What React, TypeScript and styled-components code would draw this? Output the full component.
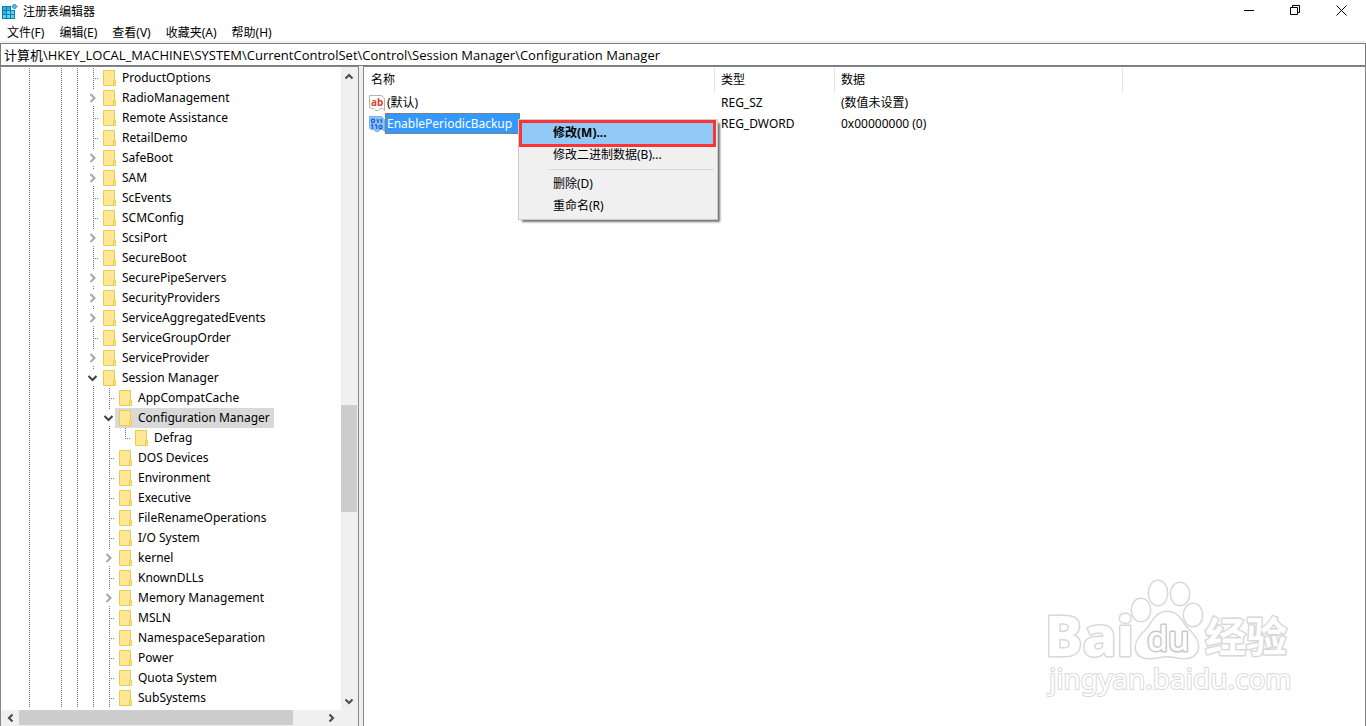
import React from "react";
import styled, { createGlobalStyle, css } from "styled-components";

const ui = `"Noto Sans", "Noto Sans CJK SC", sans-serif`;
const frame = "#828790";

const GlobalStyle = createGlobalStyle`
  * { box-sizing: border-box; }
  body { margin: 0; background: #fff; color: #000; font: 12px/20px ${ui}; overflow: hidden; }
  button, input { font: inherit; color: inherit; border: 0; padding: 0; background: none; }
`;

const Window = styled.div`
  display: flex;
  flex-direction: column;
  height: 100vh;
`;

const TitleBar = styled.header`
  display: flex;
  align-items: flex-start;
  height: 22px;
  padding: 0 2px;
  flex: none;
`;

const Title = styled.h1`
  margin: 0 auto 0 4px;
  font-size: 12px;
  line-height: 24px;
  font-weight: 400;
`;

const WindowButton = styled.button`
  width: 46px;
  height: 20px;
  display: grid;
  place-items: center;
`;

const MenuBar = styled.nav`
  display: flex;
  gap: 15px;
  height: 21px;
  flex: none;
  padding-left: 7px;
  border-bottom: 2px solid #f0f0f0;
`;

const MenuButton = styled.button`
  white-space: nowrap;
  line-height: 22px;
`;

const Address = styled.input`
  flex: none;
  height: 23px;
  width: 100%;
  padding: 0 3px;
  border: 1px solid #7a7a7a;
  outline: 0;
  font-family: "Open Sans", "Noto Sans CJK SC", sans-serif;
  font-size: 13px;
`;

const Panes = styled.main`
  flex: 1;
  min-height: 0;
  display: flex;
  gap: 4px;
  background: #f0f0f0;
`;

const TreePane = styled.section`
  flex: none;
  width: 359px;
  display: flex;
  flex-direction: column;
  border: 1px solid ${frame};
  border-bottom: 0;
  background: #fff;
`;

const TreeView = styled.div`
  flex: 1;
  min-height: 0;
  display: flex;
`;

const Tree = styled.ul`
  flex: 1;
  min-width: 0;
  overflow: hidden;
  list-style: none;
  margin: 0;
  padding: 1px 0 0 20px;
`;

const TreeRow = styled.li`
  display: flex;
  height: 20px;
`;

const dotsDown = "repeating-linear-gradient(to bottom, #707070 0 1px, transparent 1px 2px)";
const dotsAcross = "repeating-linear-gradient(to right, #707070 0 1px, transparent 1px 2px)";

const Guide = styled.span<{ $line: boolean }>`
  flex: none;
  width: 16px;
  background: ${(p) => (p.$line ? dotsDown : "none")} 8px 0 / 1px 100% no-repeat;
`;

const Branch = styled.span<{ $last?: boolean }>`
  flex: none;
  width: 14px;
  background:
    ${dotsDown} 8px 0 / 1px ${(p) => (p.$last ? "10px" : "100%")} no-repeat,
    ${dotsAcross} 8px 10px / 7px 1px no-repeat;
`;

const Expander = styled.button`
  flex: none;
  width: 14px;
  display: grid;
  align-items: center;
  background:
    ${dotsDown} 8px 0 / 1px 2px no-repeat,
    ${dotsDown} 8px 18px / 1px 2px no-repeat;
`;

const Key = styled.button<{ $selected: boolean }>`
  display: flex;
  align-items: center;
  gap: 6px;
  padding: 0 4px;
  white-space: nowrap;
  background: ${(p) => (p.$selected ? "#d9d9d9" : "none")};
`;

const KeyName = styled.span`
  line-height: 18px;
  padding-bottom: 1px;
`;

const scrollTrack = css`
  display: flex;
  flex: none;
  background: #f0f0f0;
`;

const VerticalBar = styled.div`
  ${scrollTrack}
  flex-direction: column;
  width: 17px;
  padding-right: 1px;
`;

const HorizontalBar = styled.div`
  ${scrollTrack}
  height: 16px;
  padding: 0 19px 1px 1px;
`;

const ArrowButton = styled.button<{ $vertical?: boolean }>`
  flex: none;
  width: ${(p) => (p.$vertical ? 16 : 17)}px;
  height: ${(p) => (p.$vertical ? 19 : 15)}px;
  display: grid;
  place-items: center;
`;

const Space = styled.span<{ $size: number }>`
  flex: ${(p) => p.$size} 1 0;
`;

const Thumb = styled.span<{ $size: number }>`
  flex: ${(p) => p.$size} 1 0;
  background: #cdcdcd;
`;

const ValuePane = styled.section`
  flex: 1;
  min-width: 0;
  position: relative;
  border: 1px solid ${frame};
  border-bottom: 0;
  background: #fff;
`;

const Values = styled.table`
  width: 100%;
  table-layout: fixed;
  border-collapse: separate;
  border-spacing: 0;
`;

const Column = styled.col<{ $width?: number }>`
  width: ${(p) => (p.$width ? `${p.$width}px` : "auto")};
`;

const HeadCell = styled.th`
  height: 25px;
  padding: 0 7px;
  text-align: left;
  font-weight: 400;
  border-right: 1px solid #e5e5e5;
  &:last-child { border-right: 0; }
  & + & { padding-left: 6px; }
`;

const Cell = styled.td`
  height: 21px;
  padding: 0 6px;
  white-space: nowrap;
  &:first-child { padding: 0 5px; }
`;

const NameBox = styled.div`
  display: flex;
  align-items: center;
  position: relative;
`;

const ValueName = styled.button<{ $selected?: boolean }>`
  height: 21px;
  padding: 0 8px 0 2px;
  ${(p) =>
    p.$selected &&
    css`
      color: #fff;
      background: #3399ff;
      outline: 1px dotted #cc6600;
      outline-offset: -1px;
    `}
`;

const ContextMenu = styled.div`
  position: absolute;
  left: 149px;
  top: 6px;
  width: 200px;
  z-index: 1;
  display: flex;
  flex-direction: column;
  padding: 2px;
  border: 1px solid #ccc;
  background: #f0f0f0;
  box-shadow: 3px 3px 2px -1px rgba(0, 0, 0, 0.55);
`;

const MenuItem = styled.button<{ $active?: boolean }>`
  height: 22px;
  padding-left: 32px;
  text-align: left;
  ${(p) =>
    p.$active &&
    css`
      position: relative;
      font-weight: 700;
      background: #91c9f7;
      &::after {
        content: "";
        position: absolute;
        inset: -2px -1px -3px -2px;
        border: 3px solid #fb3434;
      }
    `}
`;

const MenuRule = styled.hr`
  width: 165px;
  margin: 3px 0 3px 28px;
  border: 0;
  border-top: 1px solid #d7d7d7;
`;

const Watermark = styled.svg`
  position: absolute;
  right: 70px;
  bottom: 24px;
`;

const AppIconSvg = styled.svg`
  flex: none;
  margin-top: 3px;
`;

function Chevron({ dir }: { dir: "up" | "down" | "left" | "right" }) {
  const d = {
    up: "M1.5 6.5 5 3l3.5 3.5",
    down: "M1.5 3.5 5 7l3.5-3.5",
    left: "M6.5 1.5 3 5l3.5 3.5",
    right: "M3.5 1.5 7 5 3.5 8.5",
  }[dir];
  return (
    <svg width="10" height="10" viewBox="0 0 10 10" fill="none" stroke="#505050" strokeWidth="2.2" aria-hidden="true">
      <path d={d} />
    </svg>
  );
}

function TreeChevron({ open }: { open: boolean }) {
  return (
    <svg width="14" height="10" viewBox="0 0 14 10" fill="none" aria-hidden="true">
      {open ? (
        <path d="M3.500 3l4 4 4-4" stroke="#404040" strokeWidth="2" />
      ) : (
        <path d="M5.500 1l4 4-4 4" stroke="#a6a6a6" strokeWidth="2" />
      )}
    </svg>
  );
}

function Folder() {
  return (
    <svg width="13" height="16" viewBox="0 0 13 16" aria-hidden="true">
      <path d="M.5.5h11v15H.5z" fill="#ffe794" stroke="#ecc94f" />
      <path d="M10.5 10.5h2v5h-2z" fill="#ffe794" stroke="#ecc94f" />
    </svg>
  );
}

function AppIcon() {
  return (
    <AppIconSvg width="17" height="17" viewBox="0 0 17 17" aria-hidden="true">
      <path d="M0 3h9v4h4v9H0z" fill="#0c7cb0" />
      <path d="M1 4h3v3H1zM5 4h3v3H5zM1 8h3v3H1z" fill="#2fb4e6" />
      <path d="M5 8h3v3H5zM9 8h3v3H9zM1 12h3v3H1zM5 12h3v3H5zM9 12h3v3H9z" fill="#5fd3f7" />
      <path d="M12.500 1l2.500 2.500L12.500 6 10 3.500z" fill="#5cc4ee" stroke="#0c7cb0" />
    </AppIconSvg>
  );
}

const page = "M.5.5h12l3 3v12l-2-2h-2l-2 2h-3l-2-2h-2l-2-1z";

function StringIcon() {
  return (
    <svg width="16" height="16" viewBox="0 0 16 16" aria-hidden="true">
      <path d={page} fill="#fff" stroke="#b4b4b4" />
      <text x="2" y="11" fontFamily="Noto Sans, sans-serif" fontSize="10" fontWeight="700" fill="#d0482a">ab</text>
    </svg>
  );
}

function BinaryIcon() {
  return (
    <svg width="16" height="16" viewBox="0 0 16 16" aria-hidden="true">
      <path d={page} fill="#8fc4fb" stroke="#7ab4ee" />
      <g fill="none" stroke="#1f62dc" strokeWidth="1.400">
        <ellipse cx="4" cy="4.800" rx="1.600" ry="1.800" />
        <path d="M7.500 4H9v3M11 4h1.500v3M2 9h1.500v4M6 9h1.500v4" />
        <ellipse cx="11.500" cy="11" rx="1.600" ry="1.800" />
      </g>
    </svg>
  );
}

type Node = { name: string; level: number; open?: boolean; last?: boolean };

const leaf = (name: string, level = 0): Node => ({ name, level });
const parent = (name: string, level = 0, open = false): Node => ({ name, level, open });

const nodes: Node[] = [
  leaf("ProductOptions"),
  parent("RadioManagement"),
  leaf("Remote Assistance"),
  leaf("RetailDemo"),
  parent("SafeBoot"),
  parent("SAM"),
  leaf("ScEvents"),
  leaf("SCMConfig"),
  parent("ScsiPort"),
  leaf("SecureBoot"),
  parent("SecurePipeServers"),
  parent("SecurityProviders"),
  parent("ServiceAggregatedEvents"),
  leaf("ServiceGroupOrder"),
  parent("ServiceProvider"),
  parent("Session Manager", 0, true),
  leaf("AppCompatCache", 1),
  parent("Configuration Manager", 1, true),
  { name: "Defrag", level: 2, last: true },
  leaf("DOS Devices", 1),
  leaf("Environment", 1),
  leaf("Executive", 1),
  leaf("FileRenameOperations", 1),
  leaf("I/O System", 1),
  parent("kernel", 1),
  leaf("KnownDLLs", 1),
  parent("Memory Management", 1),
  leaf("MSLN", 1),
  leaf("NamespaceSeparation", 1),
  leaf("Power", 1),
  leaf("Quota System", 1),
  leaf("SubSystems", 1),
];

const ancestors = [true, false, true, true];

function TreeNode({ node }: { node: Node }) {
  const guides = [...ancestors, ...Array(node.level).fill(true)];
  return (
    <TreeRow>
      {guides.map((line, i) => (
        <Guide key={i} $line={line} />
      ))}
      {node.open === undefined ? (
        <Branch $last={node.last} />
      ) : (
        <Expander aria-label={`${node.open ? "折叠" : "展开"} ${node.name}`}>
          <TreeChevron open={node.open} />
        </Expander>
      )}
      <Key $selected={node.name === "Configuration Manager"}>
        <Folder />
        <KeyName>{node.name}</KeyName>
      </Key>
    </TreeRow>
  );
}

export default function App() {
  return (
    <Window>
      <GlobalStyle />
      <TitleBar>
        <AppIcon />
        <Title>注册表编辑器</Title>
        <WindowButton aria-label="最小化">
          <svg width="11" height="11"><path d="M0 5.500h10" stroke="#000" /></svg>
        </WindowButton>
        <WindowButton aria-label="还原">
          <svg width="11" height="11" fill="none" stroke="#000"><path d="M.5 2.500h7v7h-7zM2.500 2.500v-2h7v7h-2" /></svg>
        </WindowButton>
        <WindowButton aria-label="关闭">
          <svg width="11" height="11" stroke="#000"><path d="M.5 .5l10 10M10.500 .5l-10 10" /></svg>
        </WindowButton>
      </TitleBar>
      <MenuBar>
        {["文件(F)", "编辑(E)", "查看(V)", "收藏夹(A)", "帮助(H)"].map((m) => (
          <MenuButton key={m}>{m}</MenuButton>
        ))}
      </MenuBar>
      <Address
        aria-label="地址"
        defaultValue="计算机\HKEY_LOCAL_MACHINE\SYSTEM\CurrentControlSet\Control\Session Manager\Configuration Manager"
      />
      <Panes>
        <TreePane>
          <TreeView>
            <Tree>
              {nodes.map((n) => (
                <TreeNode key={n.name} node={n} />
              ))}
            </Tree>
            <VerticalBar>
              <ArrowButton $vertical aria-label="向上滚动"><Chevron dir="up" /></ArrowButton>
              <Space $size={319} />
              <Thumb $size={107} />
              <Space $size={179} />
              <ArrowButton $vertical aria-label="向下滚动"><Chevron dir="down" /></ArrowButton>
            </VerticalBar>
          </TreeView>
          <HorizontalBar>
            <ArrowButton aria-label="向左滚动"><Chevron dir="left" /></ArrowButton>
            <Thumb $size={274} />
            <Space $size={29} />
            <ArrowButton aria-label="向右滚动"><Chevron dir="right" /></ArrowButton>
          </HorizontalBar>
        </TreePane>
        <ValuePane>
          <Values>
            <colgroup>
              <Column $width={351} />
              <Column $width={120} />
              <Column $width={288} />
              <Column />
            </colgroup>
            <thead>
              <tr>
                <HeadCell>名称</HeadCell>
                <HeadCell>类型</HeadCell>
                <HeadCell>数据</HeadCell>
                <HeadCell />
              </tr>
            </thead>
            <tbody>
              <tr>
                <Cell>
                  <NameBox>
                    <StringIcon />
                    <ValueName>(默认)</ValueName>
                  </NameBox>
                </Cell>
                <Cell>REG_SZ</Cell>
                <Cell>(数值未设置)</Cell>
                <Cell />
              </tr>
              <tr>
                <Cell>
                  <NameBox>
                    <BinaryIcon />
                    <ValueName $selected>EnablePeriodicBackup</ValueName>
                    <ContextMenu>
                      <MenuItem $active>修改(M)...</MenuItem>
                      <MenuItem>修改二进制数据(B)...</MenuItem>
                      <MenuRule />
                      <MenuItem>删除(D)</MenuItem>
                      <MenuItem>重命名(R)</MenuItem>
                    </ContextMenu>
                  </NameBox>
                </Cell>
                <Cell>REG_DWORD</Cell>
                <Cell>0x00000000 (0)</Cell>
                <Cell />
              </tr>
            </tbody>
          </Values>
          <Watermark
            width="256"
            height="126"
            viewBox="0 0 256 126"
            fill="#fff"
            stroke="#d8d8d8"
            strokeWidth="3"
            strokeLinejoin="round"
            paintOrder="stroke"
            fontFamily="Noto Sans, Noto Sans CJK SC, sans-serif"
          >
            <text x="6" y="80" fontSize="56" fontWeight="800">Bai</text>
            <g strokeWidth="3">
              <ellipse cx="102" cy="34" rx="9" ry="11" />
              <ellipse cx="119" cy="17" rx="9" ry="12" />
              <ellipse cx="141" cy="18" rx="9" ry="11" />
              <ellipse cx="154" cy="39" rx="9" ry="11" />
              <path d="M128 36c-9 0-13 7-18 15-5 6-13 12-13 20 0 8 6 11 14 11 6 0 11-2 17-2s11 2 17 2c8 0 14-4 14-12 0-8-8-14-13-20-5-8-9-14-18-14z" />
            </g>
            <text x="108" y="75" fontSize="34" fontWeight="500" stroke="#c8c8c8">du</text>
            <text x="166" y="76" fontSize="41" fontWeight="700">经验</text>
            <text x="10" y="113" fontSize="28" strokeWidth="2">jingyan.baidu.com</text>
          </Watermark>
        </ValuePane>
      </Panes>
    </Window>
  );
}
